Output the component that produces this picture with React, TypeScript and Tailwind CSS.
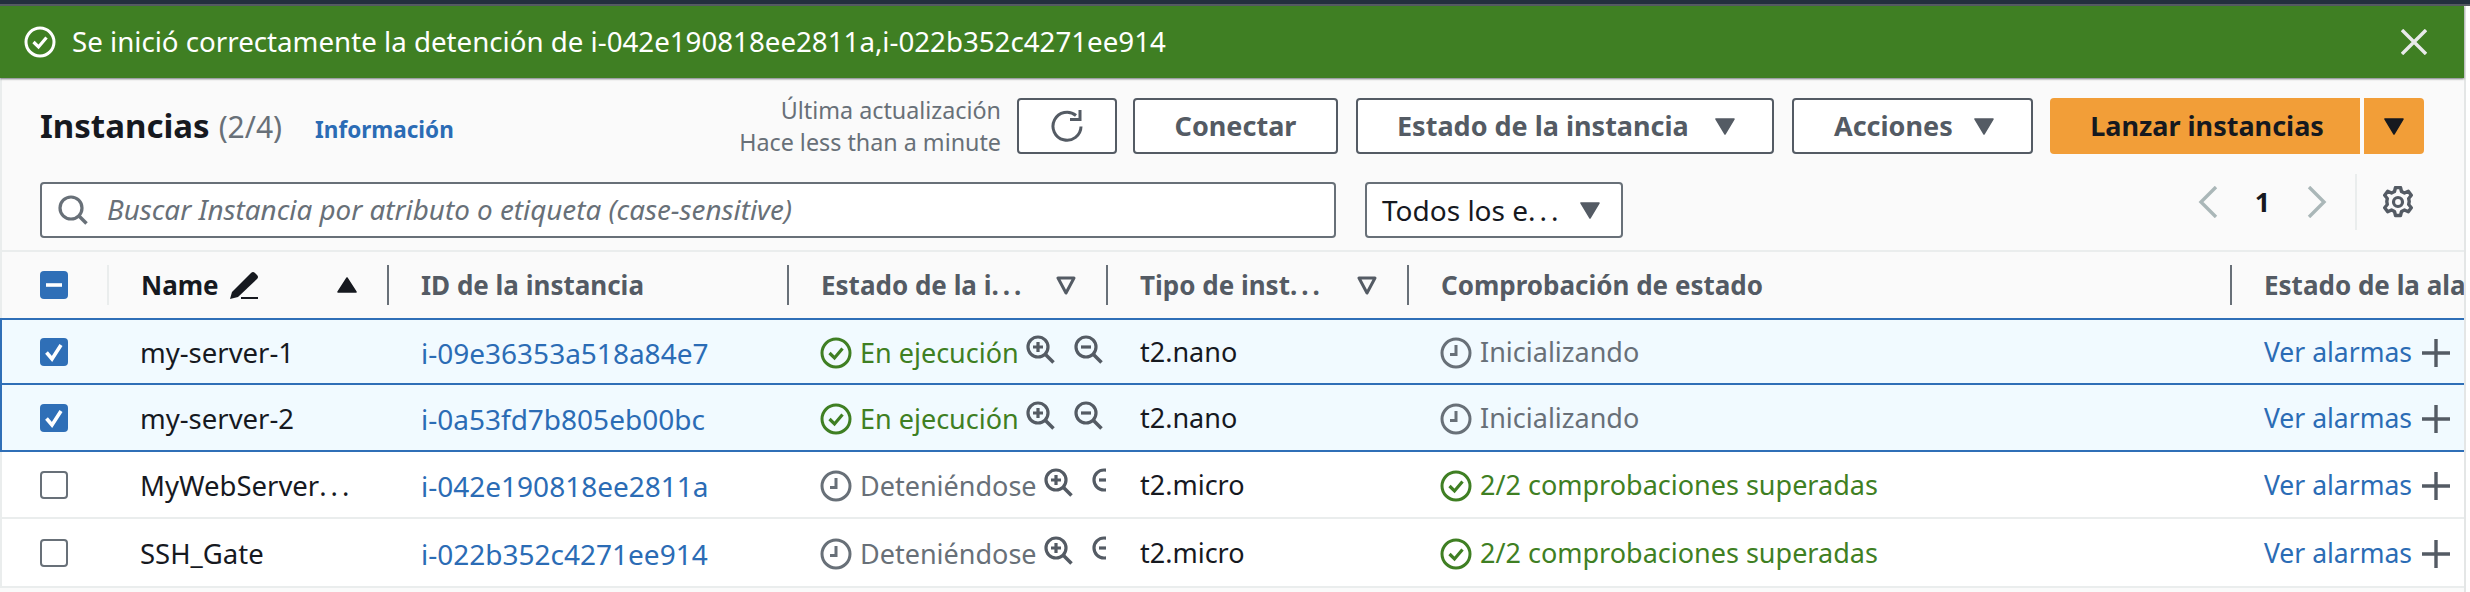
import React from 'react';

const columnWidths = ['w-[107px]', 'w-[280px]', 'w-[400px]', 'w-[319px]', 'w-[301px]', 'w-[823px]', 'w-[234px]'];

const instances = [
  { name: 'my-server-1', id: 'i-09e36353a518a84e7', state: 'En ejecución', type: 't2.nano', check: 'Inicializando', selected: true, height: 'h-[65px]' },
  { name: 'my-server-2', id: 'i-0a53fd7b805eb00bc', state: 'En ejecución', type: 't2.nano', check: 'Inicializando', selected: true, height: 'h-[67px]' },
  { name: 'MyWebServer', truncated: true, id: 'i-042e190818ee2811a', state: 'Deteniéndose', type: 't2.micro', check: '2/2 comprobaciones superadas', selected: false, height: 'h-[67px]' },
  { name: 'SSH_Gate', id: 'i-022b352c4271ee914', state: 'Deteniéndose', type: 't2.micro', check: '2/2 comprobaciones superadas', selected: false, height: 'h-[69px]' },
];

// the dots sit wider apart than the font's own
const Dots = () => <span className="tracking-[4px]">...</span>;

const StatusOk = ({ className = 'w-8 h-8 text-[#3f7f23]' }: { className?: string }) => (
  <svg viewBox="0 0 32 32" fill="none" stroke="currentColor" className={`shrink-0 ${className}`}>
    <circle cx="16" cy="16" r="14" strokeWidth="3" />
    <path d="M9.5 16l5 5 8-9.5" strokeWidth="3.2" />
  </svg>
);

const StatusPending = () => (
  <svg viewBox="0 0 32 32" fill="none" stroke="#687078" className="w-8 h-8 shrink-0">
    <circle cx="16" cy="16" r="14" strokeWidth="3" />
    <path d="M16 8v9.5H10" strokeWidth="3" />
  </svg>
);

const Zoom = ({ minus }: { minus?: boolean }) => (
  <svg viewBox="0 0 29 29" fill="none" stroke="#545b64" className="w-[29px] h-[29px] shrink-0 -mt-[4px]">
    <circle cx="12" cy="12" r="10" strokeWidth="3.2" />
    <path d="M19 19l8.5 8.5" strokeWidth="3.6" />
    <path d={minus ? 'M7 12h10' : 'M7 12h10M12 7v10'} strokeWidth="3.2" />
  </svg>
);

const Caret = ({ className }: { className: string }) => (
  <svg viewBox="0 0 20 17" className={`w-5 h-[17px] shrink-0 ${className}`} fill="currentColor">
    <path d="M1 1h18L10 16z" stroke="currentColor" strokeWidth="1.5" strokeLinejoin="round" />
  </svg>
);

const FilterCaret = () => (
  <svg viewBox="0 0 20 20" fill="none" stroke="#545b64" strokeWidth="3" className="w-5 h-5 shrink-0">
    <path d="M2 3h16l-8 15z" strokeLinejoin="round" />
  </svg>
);

const Checkbox = ({ state }: { state: 'on' | 'off' | 'mixed' }) => {
  if (state === 'off') {
    return <div className="w-7 h-7 rounded-[4px] border-2 border-[#687078] bg-white" />;
  }
  return (
    <div className="w-7 h-7 rounded-[4px] bg-[#2f6fb7] flex items-center justify-center">
      <svg viewBox="0 0 28 28" fill="none" stroke="white" strokeWidth="3.6" className="w-7 h-7">
        {state === 'on' ? <path d="M6.5 14.5l5.5 6.5 9-14" /> : <path d="M6 14h16" />}
      </svg>
    </div>
  );
};

const HeaderCell = ({ width, children, light }: { width: string; children: React.ReactNode; light?: boolean }) => (
  <div className={`${width} h-10 shrink-0 flex items-center pl-[32px] pr-[30px] overflow-hidden border-l-2 ${light ? 'border-[#eaeded]' : 'border-[#687078]'}`}>
    {children}
  </div>
);

const OutlineButton = ({ className, children }: { className: string; children: React.ReactNode }) => (
  <button className={`h-14 shrink-0 rounded-[4px] border-2 border-[#545b64] bg-white flex items-center font-bold text-[27px] text-[#545b64] ${className}`}>
    {children}
  </button>
);

const InstanceRow = ({ row }: { row: (typeof instances)[number] }) => {
  const running = row.state === 'En ejecución';
  const passed = row.check.startsWith('2/2');
  return (
    <div className={`flex items-center text-[27px] border-b-2 border-l-2 ${row.height} ${row.selected ? 'bg-[#f1faff] border-[#2f6fb7]' : 'bg-white border-[#eaeded]'}`}>
      <div className="w-[105px] shrink-0 pl-[38px]">
        <Checkbox state={row.selected ? 'on' : 'off'} />
      </div>
      <div className="w-[280px] shrink-0 pl-[33px] pt-[2px] text-[27.5px] text-[#16191f]">
        {row.name}
        {row.truncated && <Dots />}
      </div>
      <div className="w-[400px] shrink-0 pl-[34px] pt-[2px] text-[28px] text-[#2b6cb5]">{row.id}</div>
      <div className="w-[319px] shrink-0 pl-[33px] overflow-hidden flex items-center">
        <div className="flex items-center gap-2 mt-[3px] shrink-0">
          {running ? <StatusOk /> : <StatusPending />}
          <span className={running ? 'text-[#3f7f23]' : 'text-[#687078]'}>{row.state}</span>
        </div>
        <div className="flex items-center gap-[19px] ml-[7px] shrink-0">
          <Zoom />
          <Zoom minus />
        </div>
      </div>
      <div className="w-[301px] shrink-0 pl-[34px] pt-[2px] text-[#16191f]">{row.type}</div>
      <div className="w-[823px] shrink-0 pl-[33px] pt-[2px] flex items-center gap-2">
        {passed ? <StatusOk /> : <StatusPending />}
        <span className={passed ? 'text-[#3f7f23]' : 'text-[#687078]'}>{row.check}</span>
      </div>
      <div className="w-[232px] shrink-0 pl-[34px] pt-[2px] flex items-center gap-[10px] text-[#2b6cb5]">
        <span className="text-[26.5px] whitespace-nowrap">Ver alarmas</span>
        <svg viewBox="0 0 28 28" stroke="#545b64" strokeWidth="3.4" className="w-7 h-7 shrink-0">
          <path d="M0 14h28M14 0v28" />
        </svg>
      </div>
    </div>
  );
};

export default function App() {
  return (
    <div className="w-[2470px] h-[592px] overflow-hidden bg-white font-['Noto_Sans',sans-serif]">
      <div className="h-1 bg-[#232f3e]" />
      <div className="h-[2px] bg-[#555b63]" />

      <div className="w-[2466px] h-[586px] border-r-2 border-[#e4e6e6] bg-[#fafafa]">
        {/* Flash message */}
        <div className="h-[72px] bg-[#3f7f23] flex items-center pl-6 pr-[37px] shadow-[0_1px_2px_rgba(60,64,70,0.7)] relative">
          <StatusOk className="w-8 h-8 text-white" />
          <span className="ml-4 text-[27.7px] text-white">Se inició correctamente la detención de i-042e190818ee2811a,i-022b352c4271ee914</span>
          <svg viewBox="0 0 26 26" stroke="#e8eaea" strokeWidth="3.4" className="w-[26px] h-[26px] ml-auto">
            <path d="M1 1l24 24M25 1L1 25" />
          </svg>
        </div>

        {/* Header actions */}
        <div className="h-[174px] border-l-2 border-b-2 border-[#eaeded] pl-[38px] pr-10 pt-5">
          <div className="flex items-center h-14">
            <div className="flex items-baseline">
              <h1 className="text-[33px] font-bold text-[#16191f]">Instancias</h1>
              <span className="ml-[9px] text-[30px] text-[#687078]">(2/4)</span>
              <span className="ml-[33px] text-[22.5px] font-bold text-[#2b6cb5]">Información</span>
            </div>
            <div className="ml-auto mr-[16px] text-right text-[23.3px] leading-8 text-[#687078]">
              <div>Última actualización</div>
              <div>Hace less than a minute</div>
            </div>
            <OutlineButton className="w-[100px] justify-center mr-4">
              <svg viewBox="0 0 32 32" fill="none" stroke="#545b64" strokeWidth="3" className="w-8 h-8">
                <path d="M30 16.5A14 14 0 1 1 25 5.5" />
                <path d="M29 0v9.5h-10" />
              </svg>
            </OutlineButton>
            <OutlineButton className="w-[205px] justify-center mr-[18px]">Conectar</OutlineButton>
            <OutlineButton className="w-[418px] pl-[39px] mr-[18px]">
              Estado de la instancia
              <Caret className="ml-auto mr-[37px] text-[#545b64]" />
            </OutlineButton>
            <OutlineButton className="w-[241px] pl-[40px] mr-[17px]">
              Acciones
              <Caret className="ml-auto mr-[37px] text-[#545b64]" />
            </OutlineButton>
            <button className="w-[310px] h-14 pl-1 rounded-l-[4px] bg-[#f29e38] font-bold text-[27px] text-[#16191f]">Lanzar instancias</button>
            <button className="w-[60px] h-14 ml-1 rounded-r-[4px] bg-[#f29e38] flex items-center justify-center">
              <Caret className="text-[#16191f]" />
            </button>
          </div>

          <div className="flex items-start mt-7">
            <div className="w-[1296px] h-[56px] rounded-[4px] border-2 border-[#687078] bg-white flex items-center pl-[16px]">
              <svg viewBox="0 0 30 30" fill="none" stroke="#687078" className="w-[30px] h-[30px] shrink-0">
                <circle cx="13" cy="13" r="11" strokeWidth="3.2" />
                <path d="M20.5 20.5l8 8" strokeWidth="3.6" />
              </svg>
              <span className="ml-[19px] text-[27.8px] italic text-[#687078]">Buscar Instancia por atributo o etiqueta (case-sensitive)</span>
            </div>
            <div className="w-[258px] h-[56px] ml-[29px] rounded-[4px] border-2 border-[#687078] bg-white flex items-center pl-[15px]">
              <span className="text-[28px] text-[#16191f] whitespace-nowrap">Todos los e<Dots /></span>
              <Caret className="ml-auto mr-[21px] text-[#545b64]" />
            </div>
            <div className="ml-auto mr-[10px] flex items-center h-14 -mt-2">
              <svg viewBox="0 0 20 32" fill="none" stroke="#aab7b8" strokeWidth="3.4" className="w-5 h-8 ml-[2px]">
                <path d="M18 1L3 16l15 15" />
              </svg>
              <span className="w-[89px] text-center text-[27px] font-bold text-[#16191f]">1</span>
              <svg viewBox="0 0 20 32" fill="none" stroke="#aab7b8" strokeWidth="3.4" className="w-5 h-8">
                <path d="M2 1l15 15L2 31" />
              </svg>
              <div className="w-[2px] h-14 ml-[28px] bg-[#eaeded]" />
              <svg viewBox="0 0 32 32" fill="none" stroke="#545b64" className="w-8 h-8 ml-[25px]">
                <path d="M13.5 1.5h5l1 4 3 1.5 3.8-1.7 3 4-2.6 3.2.5 3-.5 3 2.6 3.2-3 4-3.8-1.7-3 1.5-1 4h-5l-1-4-3-1.5-3.8 1.7-3-4 2.6-3.2-.5-3 .5-3-2.6-3.2 3-4 3.8 1.7 3-1.5z" strokeWidth="3.4" strokeLinejoin="round" />
                <circle cx="16" cy="16" r="4.5" strokeWidth="3.2" />
              </svg>
            </div>
          </div>
        </div>

        {/* Table header */}
        <div className="h-[66px] border-l-2 border-[#eaeded] flex items-center font-bold text-[26px] text-[#545b64] overflow-hidden">
          <div className="w-[105px] shrink-0 pl-[38px]">
            <Checkbox state="mixed" />
          </div>
          <HeaderCell width={columnWidths[1]} light>
            <span className="text-[#16191f]">Name</span>
            <svg viewBox="0 0 28 28" className="w-7 h-7 ml-[11px] shrink-0" fill="#16191f">
              <path d="M0 28l2-7L21 2q2-2 4 0l2 2q2 2 0 4L8 26z" />
              <path d="M11 26h17v2.4H11z" />
            </svg>
            <svg viewBox="0 0 20 16" fill="#16191f" className="w-5 h-4 ml-auto shrink-0">
              <path d="M10 1l9 14H1z" stroke="#16191f" strokeWidth="1.5" strokeLinejoin="round" />
            </svg>
          </HeaderCell>
          <HeaderCell width={columnWidths[2]}>ID de la instancia</HeaderCell>
          <HeaderCell width={columnWidths[3]}>
            <span className="whitespace-nowrap">Estado de la i<Dots /></span>
            <div className="ml-auto"><FilterCaret /></div>
          </HeaderCell>
          <HeaderCell width={columnWidths[4]}>
            <span className="whitespace-nowrap">Tipo de inst<Dots /></span>
            <div className="ml-auto"><FilterCaret /></div>
          </HeaderCell>
          <HeaderCell width={columnWidths[5]}>Comprobación de estado</HeaderCell>
          <HeaderCell width={columnWidths[6]}>
            <span className="whitespace-nowrap">Estado de la alarma</span>
          </HeaderCell>
        </div>

        {/* Table rows */}
        <div className="h-[2px] bg-[#2f6fb7]" />
        {instances.map((row) => (
          <InstanceRow key={row.id} row={row} />
        ))}
      </div>
    </div>
  );
}
